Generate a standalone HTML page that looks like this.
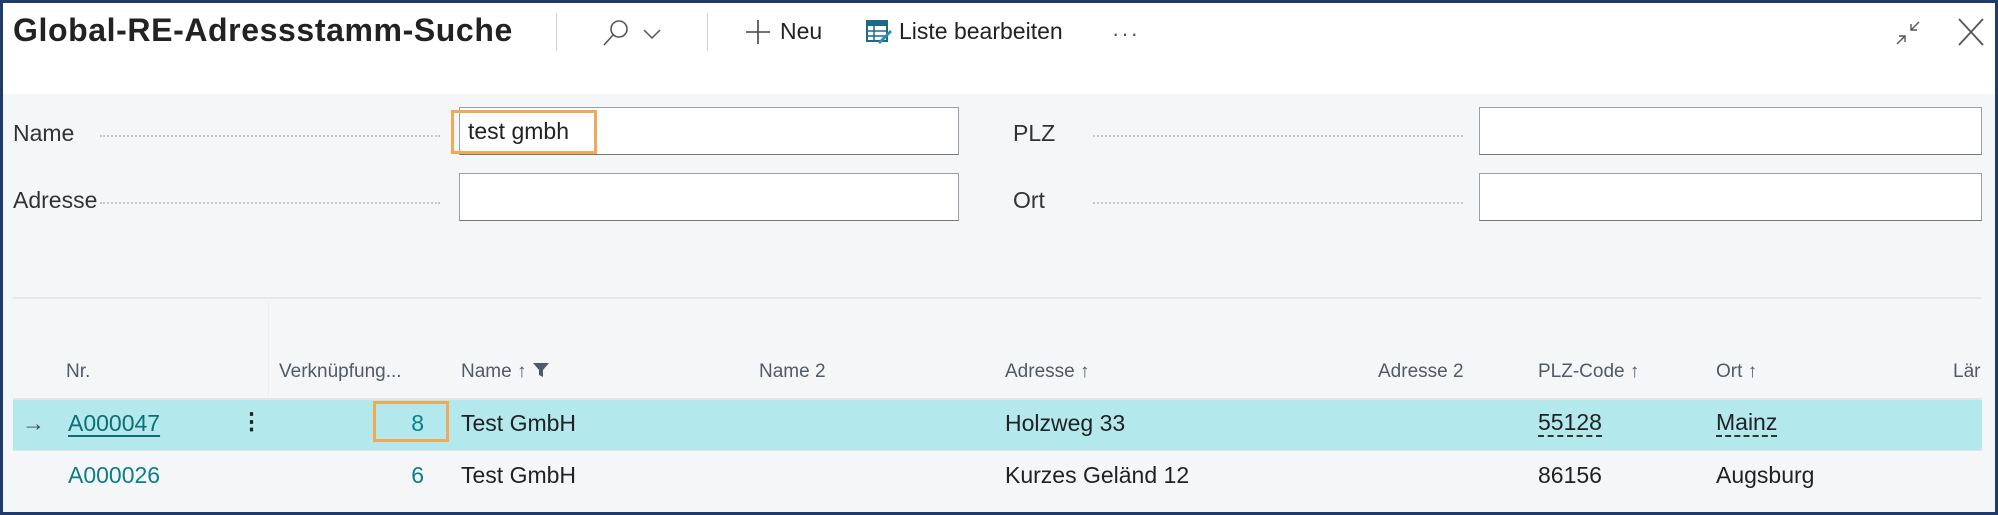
<!DOCTYPE html>
<html><head><meta charset="utf-8"><style>
*{margin:0;padding:0;box-sizing:border-box}
html,body{width:1998px;height:515px;overflow:hidden;background:#fff}
body{font-family:"Liberation Sans",sans-serif;color:#222;position:relative}
.a{position:absolute;white-space:nowrap}
#frame{position:absolute;left:0;top:0;width:1998px;height:515px;border:3px solid #1f3a6b;pointer-events:none;z-index:9}
.gray{position:absolute;left:3px;top:94px;width:1992px;height:418px;background:#f5f6f8}
.lbl{font-size:23px;color:#333}
.dots{position:absolute;height:0;border-top:2px dotted #c4c7cc}
.inp{position:absolute;background:#fff;border:1px solid #9aa0a6;border-bottom-color:#777}
.hd{font-size:19px;color:#505a68}
.cell{font-size:23px;color:#222}
.teal{color:#0b7f86}
.orange{position:absolute;border:3px solid #f0a955}
</style></head><body>
<div id="frame"></div>
<div class="a" style="left:13px;top:12px;font-size:32px;font-weight:600;color:#222;letter-spacing:0.6px">Global-RE-Adressstamm-Suche</div>
<div class="a" style="left:556px;top:13px;width:1px;height:38px;background:#d0d0d0"></div>
<svg class="a" style="left:600px;top:18px" width="70" height="30" viewBox="0 0 70 30"><circle cx="19" cy="11" r="8" fill="none" stroke="#555" stroke-width="1.6"/><line x1="13" y1="17" x2="4" y2="27" stroke="#555" stroke-width="1.6"/><polyline points="44,12 52,20 60,12" fill="none" stroke="#555" stroke-width="1.5"/></svg>
<div class="a" style="left:707px;top:13px;width:1px;height:38px;background:#d0d0d0"></div>
<svg class="a" style="left:745px;top:19px" width="26" height="26"><line x1="13" y1="1" x2="13" y2="25" stroke="#444" stroke-width="1.6"/><line x1="1" y1="13" x2="25" y2="13" stroke="#444" stroke-width="1.6"/></svg>
<div class="a" style="left:780px;top:18px;font-size:23px;color:#222">Neu</div>
<svg class="a" style="left:866px;top:20px" width="26" height="24"><rect x="1" y="1" width="20" height="20" fill="#fff" stroke="#1a6b8a" stroke-width="2"/><rect x="1" y="1" width="20" height="5" fill="#1a6b8a"/><line x1="1" y1="11" x2="21" y2="11" stroke="#1a6b8a" stroke-width="1.5"/><line x1="1" y1="16" x2="21" y2="16" stroke="#1a6b8a" stroke-width="1.5"/><line x1="8" y1="6" x2="8" y2="21" stroke="#1a6b8a" stroke-width="1.5"/><path d="M12 22 L24 10 L26 12 L14 24 Z" fill="#2a8fb0"/></svg>
<div class="a" style="left:899px;top:18px;font-size:23px;color:#222">Liste bearbeiten</div>
<div class="a" style="left:1112px;top:21px;font-size:22px;color:#555;letter-spacing:2px">···</div>
<svg class="a" style="left:1893px;top:18px" width="30" height="30"><line x1="4" y1="26" x2="12" y2="18" stroke="#555" stroke-width="1.4"/><polyline points="6,18 12,18 12,24" fill="none" stroke="#555" stroke-width="1.4"/><line x1="26" y1="4" x2="18" y2="12" stroke="#555" stroke-width="1.4"/><polyline points="18,6 18,12 24,12" fill="none" stroke="#555" stroke-width="1.4"/></svg>
<svg class="a" style="left:1956px;top:16px" width="30" height="32"><line x1="3" y1="3" x2="27" y2="29" stroke="#555" stroke-width="1.8"/><line x1="27" y1="3" x2="3" y2="29" stroke="#555" stroke-width="1.8"/></svg>

<div class="gray"></div>
<div class="a lbl" style="left:13px;top:120px">Name</div>
<div class="dots" style="left:100px;top:135px;width:340px"></div>
<div class="inp" style="left:459px;top:107px;width:500px;height:48px"></div>
<div class="orange" style="left:451px;top:110px;width:146px;height:44px"></div>
<div class="a cell" style="left:468px;top:118px">test gmbh</div>
<div class="a lbl" style="left:13px;top:187px">Adresse</div>
<div class="dots" style="left:100px;top:202px;width:340px"></div>
<div class="inp" style="left:459px;top:173px;width:500px;height:48px"></div>
<div class="a lbl" style="left:1013px;top:120px">PLZ</div>
<div class="dots" style="left:1093px;top:135px;width:370px"></div>
<div class="inp" style="left:1479px;top:107px;width:503px;height:48px"></div>
<div class="a lbl" style="left:1013px;top:187px">Ort</div>
<div class="dots" style="left:1093px;top:202px;width:370px"></div>
<div class="inp" style="left:1479px;top:173px;width:503px;height:48px"></div>

<div class="a" style="left:13px;top:297px;width:1969px;height:2px;background:#e6e7ea"></div>
<div class="a" style="left:268px;top:300px;width:1px;height:100px;background:#eceef0"></div>
<div class="a hd" style="left:66px;top:361px">Nr.</div>
<div class="a hd" style="left:279px;top:361px">Verknüpfung...</div>
<div class="a hd" style="left:461px;top:361px">Name ↑ <svg width="18" height="16" style="vertical-align:-1px"><path d="M1 1 H17 L11 8 V15 L7 13 V8 Z" fill="#505a68"/></svg></div>
<div class="a hd" style="left:759px;top:361px">Name 2</div>
<div class="a hd" style="left:1005px;top:361px">Adresse ↑</div>
<div class="a hd" style="left:1378px;top:361px">Adresse 2</div>
<div class="a hd" style="left:1538px;top:361px">PLZ-Code ↑</div>
<div class="a hd" style="left:1716px;top:361px">Ort ↑</div>
<div class="a hd" style="left:1953px;top:361px">Lär</div>

<div class="a" style="left:13px;top:398px;width:1969px;height:2px;background:#e2e4e8"></div>
<div class="a" style="left:13px;top:400px;width:1969px;height:50px;background:#b3e8ec"></div>
<div class="a" style="left:13px;top:450px;width:1969px;height:1px;background:#e2e4e8"></div>
<div class="a cell" style="left:22px;top:410px;color:#444">→</div>
<div class="a cell teal" style="left:68px;top:410px;text-decoration:underline;text-underline-offset:4px;color:#0b6f76">A000047</div>
<div class="a cell" style="left:240px;top:408px;font-weight:bold">⋮</div>
<div class="a cell teal" style="left:300px;top:410px;width:124px;text-align:right">8</div>
<div class="orange" style="left:373px;top:401px;width:76px;height:41px"></div>
<div class="a cell" style="left:461px;top:410px">Test GmbH</div>
<div class="a cell" style="left:1005px;top:410px">Holzweg 33</div>
<div class="a cell" style="left:1538px;top:410px;border-bottom:2px dashed #333;line-height:25px">55128</div>
<div class="a cell" style="left:1716px;top:410px;border-bottom:2px dashed #333;line-height:25px">Mainz</div>

<div class="a cell teal" style="left:68px;top:462px">A000026</div>
<div class="a cell teal" style="left:300px;top:462px;width:124px;text-align:right">6</div>
<div class="a cell" style="left:461px;top:462px">Test GmbH</div>
<div class="a cell" style="left:1005px;top:462px">Kurzes Geländ 12</div>
<div class="a cell" style="left:1538px;top:462px">86156</div>
<div class="a cell" style="left:1716px;top:462px">Augsburg</div>
</body></html>
